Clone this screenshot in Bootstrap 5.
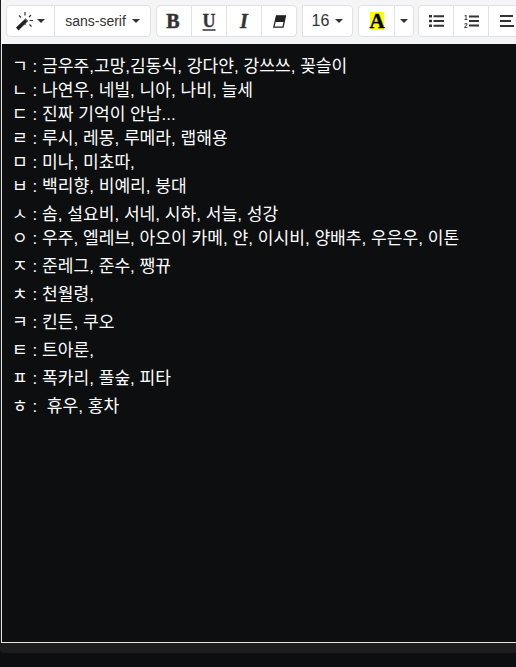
<!DOCTYPE html>
<html lang="ko"><head><meta charset="utf-8">
<link href="https://cdn.jsdelivr.net/npm/bootstrap@5.3.0/dist/css/bootstrap.min.css" rel="stylesheet">
<style>
html,body{height:100%;overflow:hidden}
body{background:#0d0e10;padding:0;margin:0;font-family:"Liberation Sans",sans-serif}
.ed-frame{width:516px;height:653px;background:#1c1c1c;border-radius:0 0 0 4px;padding-left:1px;overflow:hidden}
.ed-toolbar{background:#f5f5f5;height:44px;padding:5px 0 0 5px;gap:5px;flex-wrap:nowrap;overflow:hidden}
.ed-group{flex:none;height:32px}
.ed-btn{background:#fff;border:1px solid #dee2e6;color:#333;height:32px;padding:0;font-size:14px;display:flex;align-items:center;justify-content:center;gap:6px;border-radius:0;margin-left:-1px}
.ed-btn:first-child{border-radius:4px 0 0 4px;margin-left:0}
.ed-btn:last-child{border-radius:0 4px 4px 0}
.ed-caret{width:0;height:0;border-left:4.5px solid transparent;border-right:4.5px solid transparent;border-top:4.5px solid #333;display:block}
.w-magic{width:49px;gap:2px}.w-font{width:97px}.w-ic{width:36px}.w-size{width:51px;font-size:16px}.w-a{width:37px}.w-ac{width:20px}
.ed-shift{margin-left:-1px}
.ed-a{background:#ff0;width:14px;height:18px;font:900 21px/18px "Liberation Serif",serif;color:#000;text-align:center;display:block;-webkit-text-stroke:.4px #000}
.ed-b{font:700 20px/1 "Liberation Serif",serif;-webkit-text-stroke:.5px #333;margin-left:-2px}
.ed-u{font:700 18px/1 "Liberation Serif",serif;text-decoration:underline 2px #666;text-underline-offset:2px;-webkit-text-stroke:.3px #333}
.ed-i{font:italic 700 20px/1 "Liberation Serif",serif;-webkit-text-stroke:.4px #333}
.ed-body{background:#0d0e10;color:#fff;height:599px;border-left:1px solid #e6e6e6;border-bottom:1px solid #e6e6e6;padding:11px 0 0 10px;font:17.1px/24px "Liberation Sans","Noto Sans CJK KR",sans-serif;white-space:nowrap;overflow:hidden}
.ed-line{height:24px}
.ed-tall{height:28px;padding-top:4px}
.ed-num{font:700 6.5px "Liberation Sans",sans-serif;fill:#333}
</style></head><body>
<div class="ed-frame">
<div class="ed-toolbar d-flex">
 <div class="ed-group d-flex">
  <button class="ed-btn w-magic"><svg width="19" height="19" viewBox="0 0 19 19"><path d="M0 15.500 9.500 6.500 12 9 2.500 18.500z" fill="#222"/><path d="M8.500 7.500l1-1L12 9l-1 1z" fill="#555"/><path d="M9 0v3.500M9 11v2M13.500 8.500h3.500M3 3.500 5 5.500M15 3l-2 2M13.500 12.500l2 2" stroke="#333" stroke-width="1.200" fill="none"/></svg><span class="ed-caret"></span></button>
  <button class="ed-btn w-font">sans-serif<span class="ed-caret"></span></button>
 </div>
 <div class="ed-group d-flex">
  <button class="ed-btn w-ic"><span class="ed-b">B</span></button>
  <button class="ed-btn w-ic"><span class="ed-u">U</span></button>
  <button class="ed-btn w-ic"><span class="ed-i">I</span></button>
  <button class="ed-btn w-ic"><svg width="13" height="13" viewBox="0 0 13 13"><path d="M3.500 .8h9L10 12.200H.8z" fill="#fff" stroke="#222" stroke-width="1.300"/><path d="M3.500 .8h9L11 7H2.200z" fill="#222"/></svg></button>
 </div>
 <div class="ed-group d-flex">
  <button class="ed-btn w-size">16<span class="ed-caret"></span></button>
 </div>
 <div class="ed-group d-flex">
  <button class="ed-btn w-a"><span class="ed-a">A</span></button>
  <button class="ed-btn w-ac"><span class="ed-caret"></span></button>
 </div>
 <div class="ed-group d-flex ed-shift">
  <button class="ed-btn w-ic"><svg width="15" height="12" viewBox="0 0 15 12"><path d="M0 0h3v2.500H0zM0 4.700h3v2.500H0zM0 9.500h3V12H0zM4.500 .3H15v2H4.500zM4.500 5H15v2H4.500zM4.500 9.800H15v2H4.500z" fill="#333"/></svg></button>
  <button class="ed-btn w-ic"><svg width="15" height="15" viewBox="0 0 15 15"><path d="M5 1.500h10v2H5zM5 6h10v2H5zM5 10.500h10v2H5z" fill="#333"/><text class="ed-num" x="0" y="6">1</text><text class="ed-num" x="0" y="13.500">2</text></svg></button>
  <button class="ed-btn w-ic"><svg width="15" height="12" viewBox="0 0 15 12"><path d="M1 0h13v2H1zM1 5h11v2H1zM1 10h14v2H1z" fill="#333"/></svg></button>
 </div>
</div>
<div class="ed-body">
<div class="ed-line">ㄱ : 금우주,고망,김동식, 강다얀, 강쓰쓰, 꽂슬이</div>
<div class="ed-line">ㄴ : 나연우, 네빌, 니아, 나비, 늘세</div>
<div class="ed-line">ㄷ : 진짜 기억이 안남...</div>
<div class="ed-line">ㄹ : 루시, 레몽, 루메라, 랩해용</div>
<div class="ed-line">ㅁ : 미나, 미쵸따,</div>
<div class="ed-line">ㅂ : 백리향, 비예리, 붕대</div>
<div class="ed-tall">ㅅ : 솜, 설요비, 서네, 시하, 서늘, 성강</div>
<div class="ed-line">ㅇ : 우주, 엘레브, 아오이 카메, 얀, 이시비, 양배추, 우은우, 이톤</div>
<div class="ed-tall">ㅈ : 준레그, 준수, 쨍뀨</div>
<div class="ed-tall">ㅊ : 천월령,</div>
<div class="ed-tall">ㅋ : 킨든, 쿠오</div>
<div class="ed-tall">ㅌ : 트아룬,</div>
<div class="ed-tall">ㅍ : 폭카리, 풀숲, 피타</div>
<div class="ed-tall">ㅎ :&nbsp; 휴우, 홍차</div>
</div>
</div>
<script src="https://cdn.jsdelivr.net/npm/bootstrap@5.3.0/dist/js/bootstrap.bundle.min.js"></script>
</body></html>
